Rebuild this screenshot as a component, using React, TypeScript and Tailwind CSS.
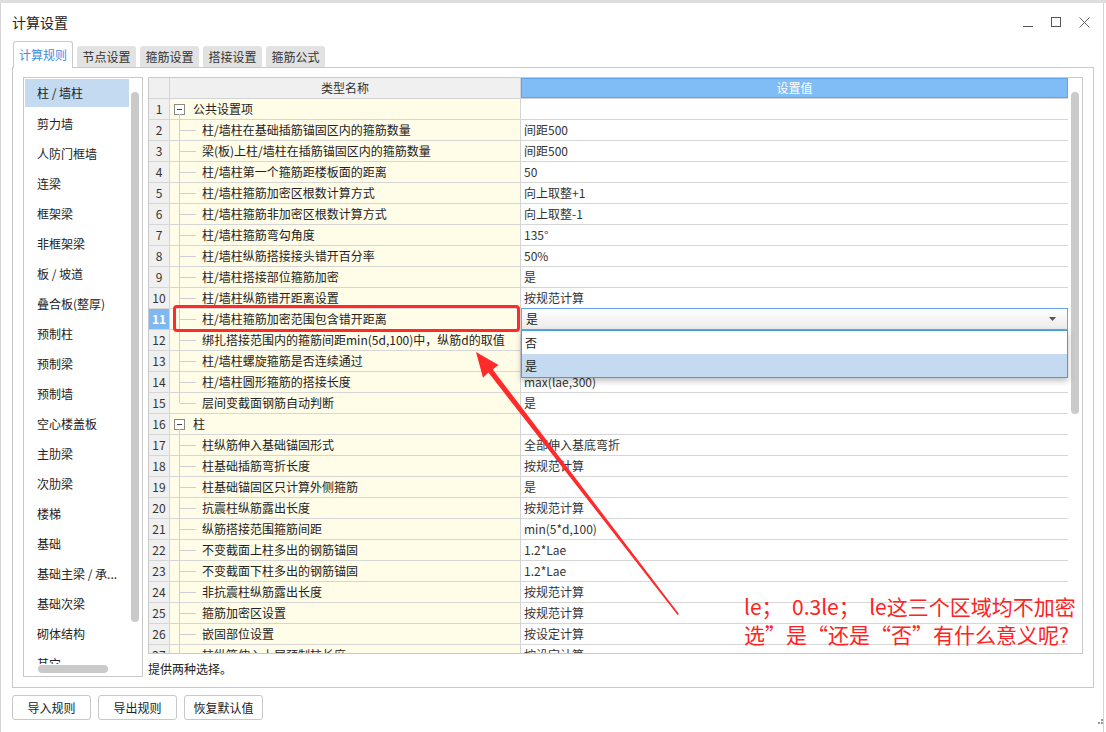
import React from "react";

const FONT = { fontFamily: '"Noto Sans CJK SC", "Noto Sans", sans-serif' };

type Row = { n: number; name: string; value?: string; group?: boolean };

const rows: Row[] = [
  { n: 1, name: "公共设置项", group: true },
  { n: 2, name: "柱/墙柱在基础插筋锚固区内的箍筋数量", value: "间距500" },
  { n: 3, name: "梁(板)上柱/墙柱在插筋锚固区内的箍筋数量", value: "间距500" },
  { n: 4, name: "柱/墙柱第一个箍筋距楼板面的距离", value: "50" },
  { n: 5, name: "柱/墙柱箍筋加密区根数计算方式", value: "向上取整+1" },
  { n: 6, name: "柱/墙柱箍筋非加密区根数计算方式", value: "向上取整-1" },
  { n: 7, name: "柱/墙柱箍筋弯勾角度", value: "135°" },
  { n: 8, name: "柱/墙柱纵筋搭接接头错开百分率", value: "50%" },
  { n: 9, name: "柱/墙柱搭接部位箍筋加密", value: "是" },
  { n: 10, name: "柱/墙柱纵筋错开距离设置", value: "按规范计算" },
  { n: 11, name: "柱/墙柱箍筋加密范围包含错开距离", value: "是" },
  { n: 12, name: "绑扎搭接范围内的箍筋间距min(5d,100)中，纵筋d的取值", value: "" },
  { n: 13, name: "柱/墙柱螺旋箍筋是否连续通过", value: "" },
  { n: 14, name: "柱/墙柱圆形箍筋的搭接长度", value: "max(lae,300)" },
  { n: 15, name: "层间变截面钢筋自动判断", value: "是" },
  { n: 16, name: "柱", group: true },
  { n: 17, name: "柱纵筋伸入基础锚固形式", value: "全部伸入基底弯折" },
  { n: 18, name: "柱基础插筋弯折长度", value: "按规范计算" },
  { n: 19, name: "柱基础锚固区只计算外侧箍筋", value: "是" },
  { n: 20, name: "抗震柱纵筋露出长度", value: "按规范计算" },
  { n: 21, name: "纵筋搭接范围箍筋间距", value: "min(5*d,100)" },
  { n: 22, name: "不变截面上柱多出的钢筋锚固", value: "1.2*Lae" },
  { n: 23, name: "不变截面下柱多出的钢筋锚固", value: "1.2*Lae" },
  { n: 24, name: "非抗震柱纵筋露出长度", value: "按规范计算" },
  { n: 25, name: "箍筋加密区设置", value: "按规范计算" },
  { n: 26, name: "嵌固部位设置", value: "按设定计算" },
  { n: 27, name: "柱纵筋伸入上层预制柱长度", value: "按设定计算" },
];

const components = [
  "柱 / 墙柱", "剪力墙", "人防门框墙", "连梁", "框架梁", "非框架梁", "板 / 坡道",
  "叠合板(整厚)", "预制柱", "预制梁", "预制墙", "空心楼盖板", "主肋梁", "次肋梁",
  "楼梯", "基础", "基础主梁 / 承...", "基础次梁", "砌体结构", "其它",
];

const tabs = ["计算规则", "节点设置", "箍筋设置", "搭接设置", "箍筋公式"];

function TreeCell({ row }: { row: Row }) {
  const last = row.n === 15 || row.n === 27;
  if (row.group) {
    return (
      <div className="relative flex items-center h-full pl-[4px]">
        <div className="w-[11px] h-[11px] border border-[#8a8a8a] bg-white flex items-center justify-center">
          <div className="w-[5px] h-px bg-[#444]" />
        </div>
        <span className="ml-[8px]">{row.name}</span>
        <div className="absolute left-[9px] top-[15px] bottom-[-1px] w-px bg-[#cfcfcf]" />
      </div>
    );
  }
  return (
    <div className="relative flex items-center h-full">
      <div className={`absolute left-[9px] top-[-1px] w-px bg-[#cfcfcf] ${last ? "h-[11px]" : "bottom-[-1px]"}`} />
      <div className="absolute left-[10px] top-[10px] w-[16px] h-px bg-[#cfcfcf]" />
      <span className="ml-[32px] whitespace-nowrap">{row.name}</span>
    </div>
  );
}

export default function App() {
  return (
    <div className="relative w-[1106px] h-[732px] bg-white overflow-hidden text-[#222]" style={FONT}>
      <div className="h-[3px] bg-[#dedede]" />
      <div className="w-[1104px] h-[729px] border-l border-r border-[#d4d4d4] flex flex-col">
        {/* title bar */}
        <div className="h-[38px] flex items-center pl-[11px] pr-[13px]">
          <span className="text-[14px]">计算设置</span>
          <div className="ml-auto flex items-center gap-[18px]">
            <svg width="10" height="10" viewBox="0 0 10 10"><path d="M0 9.5H10" stroke="#555" strokeWidth="1" /></svg>
            <svg width="10" height="10" viewBox="0 0 10 10"><rect x="0.5" y="0.5" width="9" height="9" fill="none" stroke="#555" /></svg>
            <svg width="11" height="11" viewBox="0 0 11 11"><path d="M0.5 0.5L10.5 10.5M10.5 0.5L0.5 10.5" stroke="#666" strokeWidth="1" /></svg>
          </div>
        </div>

        {/* tabs */}
        <div className="h-[27px] flex items-end pl-[12px] gap-[4px] relative z-10">
          {tabs.map((t, i) =>
            i === 0 ? (
              <div key={t} className="w-[60px] h-[27px] bg-white border border-b-0 border-[#c9c9c9] rounded-t-[3px] flex items-center justify-center text-[12px] text-[#3b8de2]">
                {t}
              </div>
            ) : (
              <div key={t} className="w-[59px] h-[21px] mb-px bg-[#e2e2e2] rounded-t-[3px] flex items-center justify-center text-[12px] text-[#333]">
                {t}
              </div>
            )
          )}
        </div>

        {/* panel */}
        <div className="ml-[11px] w-[1082px] h-[621px] -mt-px border border-[#c9c9c9] flex pt-[9px] pl-[10px]">
          {/* component list */}
          <div className="relative w-[120px] h-[600px] border border-[#c9c9c9] overflow-hidden">
            <div className="pl-px">
              {components.map((c, i) => (
                <div
                  key={c}
                  className={`w-[104px] pl-[12px] flex items-center text-[12px] whitespace-nowrap ${i === 0 ? "bg-[#c4daf1] h-[28px] mt-px mb-[2px]" : "h-[30px]"}`}
                >
                  {c}
                </div>
              ))}
            </div>
            <div className="absolute left-0 right-0 bottom-0 h-[12px] bg-white" />
            <div className="absolute right-[3px] top-[14px] w-[8px] h-[530px] rounded-full bg-[#cacaca]" />
            <div className="absolute left-[14px] bottom-[3px] w-[70px] h-[8px] rounded-full bg-[#cacaca]" />
          </div>

          {/* grid + status */}
          <div className="ml-[5px] flex flex-col">
            <div className="w-[935px] h-[577px] border border-[#c9c9c9] flex overflow-hidden text-[12px]">
              <div className="relative w-[919px]">
                {/* header */}
                <div className="flex h-[21px] border-b border-[#d4d4d4]">
                  <div className="w-[21px] bg-[#f0f0f0] border-r border-[#d4d4d4]" />
                  <div className="w-[351px] bg-[#f0f0f0] border-r border-[#d4d4d4] flex items-center justify-center text-[#333]">类型名称</div>
                  <div className="w-[547px] bg-[#80bcf6] border border-[#5fa5ee] flex items-center justify-center text-white">设置值</div>
                </div>
                {rows.map((r) => (
                  <div key={r.n} className="flex h-[21px] border-b border-[#d6d6d6] leading-[20px]">
                    <div
                      className={`w-[21px] border-r border-[#d4d4d4] flex items-center justify-center ${r.n === 11 ? "bg-[#7fb7f3] text-white font-bold" : "bg-[#f0f0f0] text-[#333]"}`}
                    >
                      {r.n}
                    </div>
                    <div className="w-[351px] bg-[#fffce8] border-r border-[#d4d4d4]">
                      <TreeCell row={r} />
                    </div>
                    <div className="w-[547px] relative flex items-center pl-[3px]">
                      {r.n === 11 ? (
                        <div className="absolute left-0 top-[-1px] w-[547px] h-[22px] border border-[#66a8e6] bg-gradient-to-b from-white to-[#ebebeb] flex items-center pl-[4px]">
                          <span>{r.value}</span>
                          <svg className="ml-auto mr-[11px]" width="7" height="4" viewBox="0 0 7 4"><path d="M0 0H7L3.5 4Z" fill="#555" /></svg>
                        </div>
                      ) : (
                        <span className="text-[#333]">{r.value}</span>
                      )}
                    </div>
                  </div>
                ))}

                {/* open dropdown list */}
                <div className="absolute left-[372px] top-[252px] w-[547px] h-[48px] bg-white border border-[#45a1d4] shadow-[0_3px_6px_rgba(0,0,0,0.25)] flex flex-col">
                  <div className="h-[23px] flex items-center pl-[3px]">否</div>
                  <div className="flex-1 bg-[#c4daf0] flex items-center pl-[3px]">是</div>
                </div>
              </div>
              {/* vertical scrollbar */}
              <div className="w-[14px] pt-[14px] pl-[3px]">
                <div className="w-[8px] h-[322px] rounded-full bg-[#cacaca]" />
              </div>
            </div>
            <div className="text-[12px] mt-[6px] text-[#222]">提供两种选择。</div>
          </div>
        </div>

        {/* buttons */}
        <div className="flex gap-[7px] pl-[11px] mt-[7px]">
          {["导入规则", "导出规则", "恢复默认值"].map((b) => (
            <div key={b} className="w-[79px] h-[25px] border border-[#c8c8c8] rounded-[3px] bg-white flex items-center justify-center text-[12px] text-[#222]">
              {b}
            </div>
          ))}
        </div>
      </div>

      {/* resize grip */}
      <div className="absolute right-[3px] bottom-[8px] grid grid-cols-2 gap-[1px]">
        <div className="w-[2px] h-[2px]" />
        <div className="w-[2px] h-[2px] bg-[#999]" />
        <div className="w-[2px] h-[2px] bg-[#999]" />
        <div className="w-[2px] h-[2px] bg-[#999]" />
      </div>

      {/* annotations */}
      <div className="absolute left-[173px] top-[305px] w-[347px] h-[27px] border-[3px] border-[#ff2a2a] rounded-[4px]" />
      <svg className="absolute left-0 top-0 pointer-events-none" width="1106" height="732" viewBox="0 0 1106 732">
        <polygon
          points="476,352 498.5,365 492.8,369.6 679,614 677.6,615 488.4,372.6 483,377.8"
          fill="#ff2a2a"
        />
      </svg>
      <div className="absolute left-[744px] top-[592px] text-[21px] leading-[28px] text-[#ff2222] whitespace-pre">
        <div>{"le；  0.3le；  le这三个区域均不加密"}</div>
        <div>{"选”是“还是“否”有什么意义呢?"}</div>
      </div>
    </div>
  );
}
